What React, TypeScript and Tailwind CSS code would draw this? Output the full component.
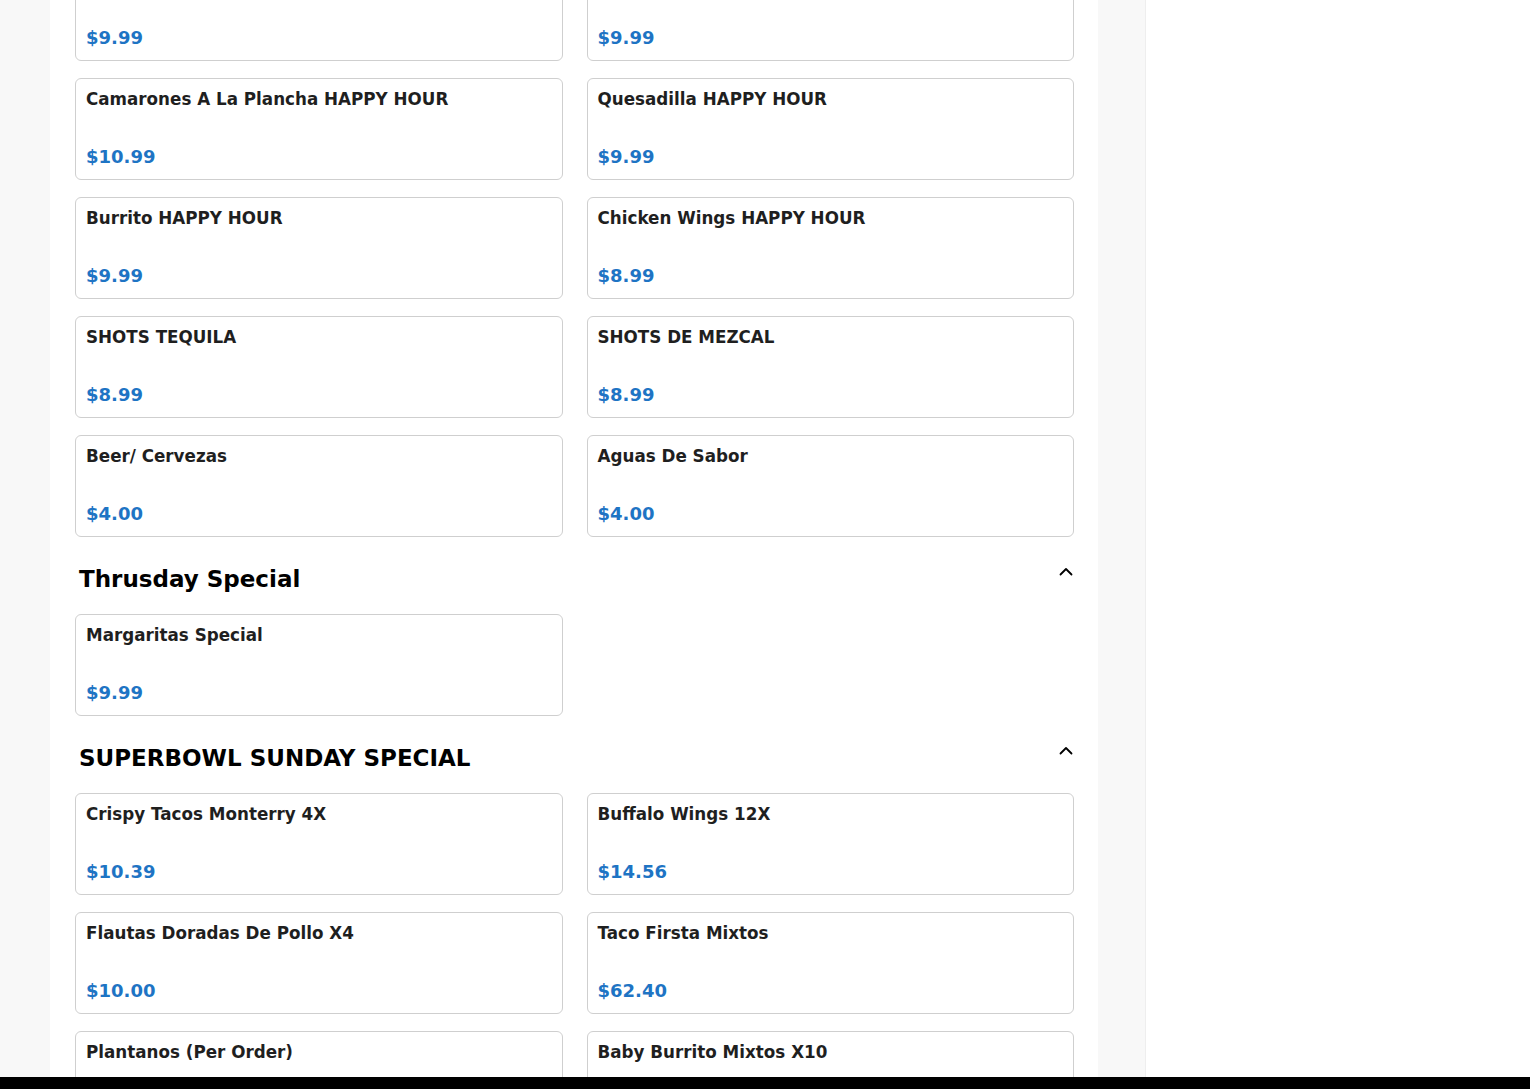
import React from "react";

interface Item {
  name: string;
  price: string;
}

interface Section {
  title?: string;
  items: Item[];
}

const sections: Section[] = [
  {
    items: [
      { name: "Tacos HAPPY HOUR", price: "$9.99" },
      { name: "Nachos HAPPY HOUR", price: "$9.99" },
      { name: "Camarones A La Plancha HAPPY HOUR", price: "$10.99" },
      { name: "Quesadilla HAPPY HOUR", price: "$9.99" },
      { name: "Burrito HAPPY HOUR", price: "$9.99" },
      { name: "Chicken Wings HAPPY HOUR", price: "$8.99" },
      { name: "SHOTS TEQUILA", price: "$8.99" },
      { name: "SHOTS DE MEZCAL", price: "$8.99" },
      { name: "Beer/ Cervezas", price: "$4.00" },
      { name: "Aguas De Sabor", price: "$4.00" },
    ],
  },
  {
    title: "Thrusday Special",
    items: [{ name: "Margaritas Special", price: "$9.99" }],
  },
  {
    title: "SUPERBOWL SUNDAY SPECIAL",
    items: [
      { name: "Crispy Tacos Monterry 4X", price: "$10.39" },
      { name: "Buffalo Wings 12X", price: "$14.56" },
      { name: "Flautas Doradas De Pollo X4", price: "$10.00" },
      { name: "Taco Firsta Mixtos", price: "$62.40" },
      { name: "Plantanos (Per Order)", price: "$8.99" },
      { name: "Baby Burrito Mixtos X10", price: "$20.80" },
    ],
  },
];

const ItemCard: React.FC<{ item: Item }> = ({ item }) => (
  <div className="h-[102px] rounded-md border border-[#cfcfcf] bg-white px-[10px] pt-[9px]">
    <div className="text-[16.75px] leading-[22px] font-bold text-[#1f1f1f]">
      {item.name}
    </div>
    <div className="mt-[36px] text-[18px] leading-[22px] font-bold text-[#1e74c4]">
      {item.price}
    </div>
  </div>
);

const SectionHeader: React.FC<{ title: string }> = ({ title }) => (
  <div className="flex items-start justify-between pt-[27px] pb-[20px] pl-[4px] pr-[1px]">
    <h2 className="text-[23px] leading-[30px] font-bold text-black">{title}</h2>
    <svg
      width="14"
      height="14"
      viewBox="0 0 14 14"
      fill="none"
      stroke="black"
      strokeWidth="1.8"
      strokeLinecap="round"
      strokeLinejoin="round"
    >
      <path d="M1.5 10.5L7 5l5.5 5.5" />
    </svg>
  </div>
);

export default function App() {
  return (
    <div
      className="relative flex h-[1089px] w-full overflow-hidden bg-white"
      style={{ fontFamily: '"DejaVu Sans", sans-serif' }}
    >
      <div className="w-[50px] shrink-0 bg-[#f8f8f8]" />
      <main className="w-[1048px] shrink-0 bg-white pl-[25px] pr-[24px]">
        <div className="-mt-[41px]">
          {sections.map((section, i) => (
            <div key={i}>
              {section.title && <SectionHeader title={section.title} />}
              <div className="grid grid-cols-2 gap-x-[24px] gap-y-[17px]">
                {section.items.map((item) => (
                  <ItemCard key={item.name} item={item} />
                ))}
              </div>
            </div>
          ))}
        </div>
      </main>
      <div className="w-[48px] shrink-0 border-r border-[#eeeeee] bg-[#f8f8f8]" />
      <div className="flex-1 bg-white" />
      <div className="absolute bottom-0 left-0 h-[12px] w-full bg-black" />
    </div>
  );
}
